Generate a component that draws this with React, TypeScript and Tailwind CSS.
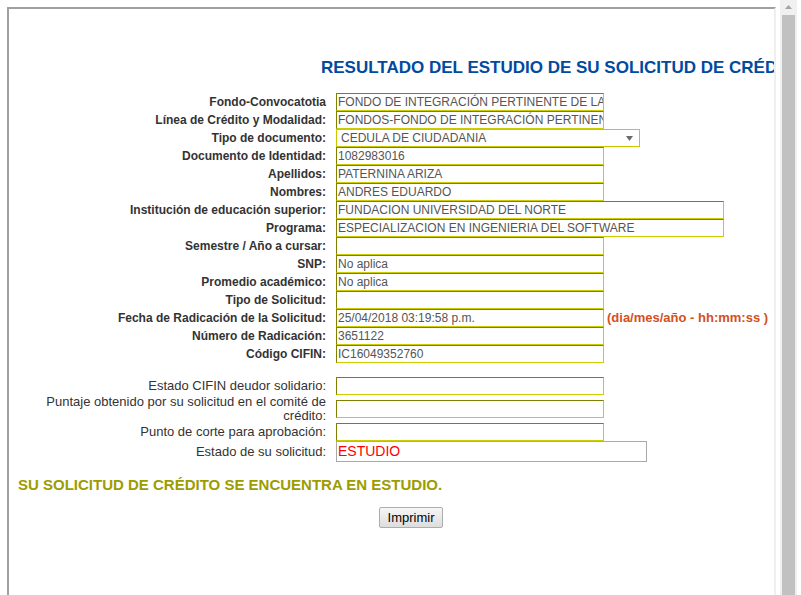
type Field = {
  label: string
  value: string
  wide?: boolean
  select?: boolean
  hint?: string
}

const fields: Field[] = [
  { label: 'Fondo-Convocatotia', value: 'FONDO DE INTEGRACIÓN PERTINENTE DE LA REGIÓN CARIBE' },
  { label: 'Línea de Crédito y Modalidad:', value: 'FONDOS-FONDO DE INTEGRACIÓN PERTINENTE DE LA REGIÓN CARIBE' },
  { label: 'Tipo de documento:', value: 'CEDULA DE CIUDADANIA', select: true },
  { label: 'Documento de Identidad:', value: '1082983016' },
  { label: 'Apellidos:', value: 'PATERNINA ARIZA' },
  { label: 'Nombres:', value: 'ANDRES EDUARDO' },
  { label: 'Institución de educación superior:', value: 'FUNDACION UNIVERSIDAD DEL NORTE', wide: true },
  { label: 'Programa:', value: 'ESPECIALIZACION EN INGENIERIA DEL SOFTWARE', wide: true },
  { label: 'Semestre / Año a cursar:', value: '' },
  { label: 'SNP:', value: 'No aplica' },
  { label: 'Promedio académico:', value: 'No aplica' },
  { label: 'Tipo de Solicitud:', value: '' },
  { label: 'Fecha de Radicación de la Solicitud:', value: '25/04/2018 03:19:58 p.m.', hint: '(dia/mes/año - hh:mm:ss )' },
  { label: 'Número de Radicación:', value: '3651122' },
  { label: 'Código CIFIN:', value: 'IC16049352760' },
]

const results = [
  'Estado CIFIN deudor solidario:',
  'Puntaje obtenido por su solicitud en el comité de crédito:',
  'Punto de corte para aprobación:',
]

function TextBox({ value, wide }: { value: string; wide?: boolean }) {
  return (
    <div
      className={`h-[18px] shrink-0 overflow-hidden whitespace-nowrap border border-t-[#808000] border-l-[#808000] border-b-[#cccc00] border-r-[#cccc00] pl-px text-[12px] leading-[16px] text-[#555] ${
        wide ? 'w-[388px]' : 'w-[268px]'
      }`}
    >
      {value}
    </div>
  )
}

function SelectBox({ value }: { value: string }) {
  return (
    <div className="flex h-[18px] w-[304px] shrink-0 items-center justify-between border border-[#c8c800] pl-[4px] pr-[6px] text-[12px] leading-[16px] text-[#555]">
      <span>{value}</span>
      <svg width="7" height="5" viewBox="0 0 7 5">
        <path d="M0 0h7L3.5 5z" fill="#6b6b6b" />
      </svg>
    </div>
  )
}

export default function App() {
  return (
    <div className="flex h-[595px] w-[801px] overflow-hidden bg-white font-['Liberation_Sans',Arial,sans-serif]">
      <div className="ml-[7px] mt-[7px] h-[600px] w-[769px] shrink-0 overflow-hidden border-t-2 border-l-2 border-r-2 border-t-[#a0a0a0] border-l-[#a0a0a0] border-r-[#efefef]">
        <div className="pl-[312px] pt-[49px] whitespace-nowrap text-[17px] font-bold leading-[20px] text-[#004a9f]">
          RESULTADO DEL ESTUDIO DE SU SOLICITUD DE CRÉDITO
        </div>

        <div className="ml-[32px] mt-[15px] flex flex-col">
          {fields.map((f) => (
            <div key={f.label} className="flex h-[18px] items-center">
              <div className="w-[285px] shrink-0 text-right text-[12px] font-bold leading-[14px] text-[#333]">
                {f.label}
              </div>
              <div className="ml-[10px] flex items-center">
                {f.select ? <SelectBox value={f.value} /> : <TextBox value={f.value} wide={f.wide} />}
                {f.hint && (
                  <span className="ml-[3px] whitespace-nowrap text-[13px] font-bold leading-[16px] text-[#d4501c]">
                    {f.hint}
                  </span>
                )}
              </div>
            </div>
          ))}

          <div className="h-[14px]" />

          {results.map((label) => (
            <div key={label} className="flex min-h-[18px] items-center">
              <div className="w-[285px] shrink-0 text-right text-[13px] leading-[14px] text-[#333]">{label}</div>
              <div className="ml-[10px]">
                <TextBox value="" />
              </div>
            </div>
          ))}

          <div className="flex h-[21px] items-center">
            <div className="w-[285px] shrink-0 text-right text-[13px] leading-[14px] text-[#333]">
              Estado de su solicitud:
            </div>
            <div className="ml-[10px] h-[21px] w-[311px] border border-[#a9a9a9] pl-px text-[14px] leading-[19px] text-[#ff0000]">
              ESTUDIO
            </div>
          </div>
        </div>

        <div className="ml-[9px] mt-[14px] whitespace-nowrap text-[15px] font-bold leading-[18px] text-[#9c9c00]">
          SU SOLICITUD DE CRÉDITO SE ENCUENTRA EN ESTUDIO.
        </div>

        <button className="ml-[370px] mt-[13px] h-[21px] w-[64px] rounded-[2px] border border-[#adadad] bg-gradient-to-b from-[#f6f6f6] to-[#dddddd] text-[13px] leading-[19px] text-black">
          Imprimir
        </button>
      </div>

      <div className="ml-[4px] flex h-full w-[17px] shrink-0 flex-col bg-[#f0f0f0]">
        <div className="flex h-[15px] items-start justify-center pt-[5px]">
          <svg width="7" height="4" viewBox="0 0 7 4">
            <path d="M3.5 0L7 4H0z" fill="#a3a3a3" />
          </svg>
        </div>
        <div className="mx-[2px] flex-1 bg-[#c1c1c1]" />
      </div>
    </div>
  )
}
